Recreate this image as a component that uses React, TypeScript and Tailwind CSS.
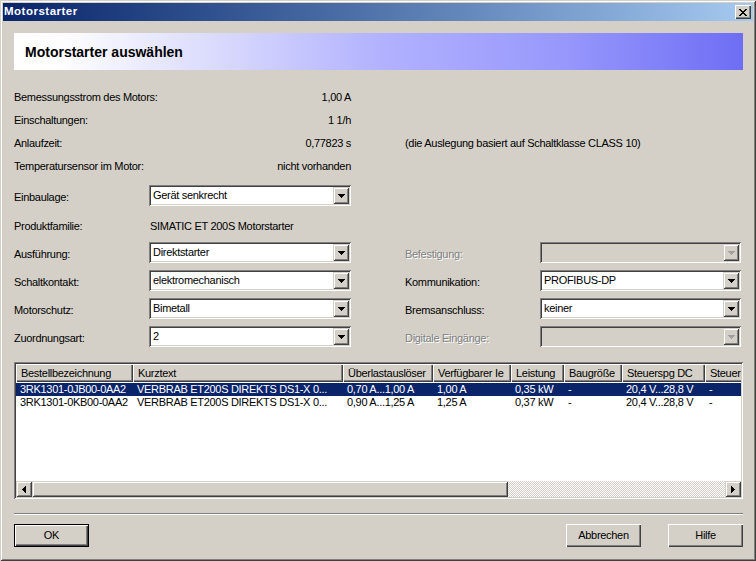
import React from "react";

const SUNKEN =
  "shadow-[inset_1px_1px_0_#808080,inset_-1px_-1px_0_#ffffff,inset_2px_2px_0_#404040,inset_-2px_-2px_0_#d4d0c8]";
const RAISED =
  "shadow-[inset_1px_1px_0_#ffffff,inset_-1px_-1px_0_#404040,inset_-2px_-2px_0_#808080]";
const RAISED_COMBO =
  "shadow-[inset_1px_1px_0_#d4d0c8,inset_-1px_-1px_0_#404040,inset_2px_2px_0_#ffffff,inset_-2px_-2px_0_#808080]";

function DownArrow({ color }: { color: string }) {
  return (
    <svg width="7" height="4" viewBox="0 0 7 4" shapeRendering="crispEdges">
      <rect x="0" y="0" width="7" height="1" fill={color} />
      <rect x="1" y="1" width="5" height="1" fill={color} />
      <rect x="2" y="2" width="3" height="1" fill={color} />
      <rect x="3" y="3" width="1" height="1" fill={color} />
    </svg>
  );
}

function SideArrow({ dir }: { dir: "left" | "right" }) {
  return (
    <svg width="4" height="7" viewBox="0 0 4 7" shapeRendering="crispEdges">
      {dir === "left" ? (
        <>
          <rect x="3" y="0" width="1" height="7" fill="#000" />
          <rect x="2" y="1" width="1" height="5" fill="#000" />
          <rect x="1" y="2" width="1" height="3" fill="#000" />
          <rect x="0" y="3" width="1" height="1" fill="#000" />
        </>
      ) : (
        <>
          <rect x="0" y="0" width="1" height="7" fill="#000" />
          <rect x="1" y="1" width="1" height="5" fill="#000" />
          <rect x="2" y="2" width="1" height="3" fill="#000" />
          <rect x="3" y="3" width="1" height="1" fill="#000" />
        </>
      )}
    </svg>
  );
}

function Combo({ value, disabled }: { value?: string; disabled?: boolean }) {
  return (
    <div
      className={`h-[21px] w-full flex p-[2px] ${SUNKEN} ${
        disabled ? "bg-[#d4d0c8]" : "bg-white"
      }`}
    >
      <div className="flex-1 flex items-center pl-[2px] whitespace-nowrap overflow-hidden">
        {value}
      </div>
      <div
        className={`w-[16px] h-full bg-[#d4d0c8] flex items-center justify-center ${RAISED_COMBO}`}
      >
        <DownArrow color={disabled ? "#a0a0a0" : "#000000"} />
      </div>
    </div>
  );
}

function Label({ text, disabled }: { text: string; disabled?: boolean }) {
  return (
    <div
      className={`flex items-center pt-[3px] whitespace-nowrap ${
        disabled ? "text-[#808080] [text-shadow:1px_1px_0_#ffffff]" : ""
      }`}
    >
      {text}
    </div>
  );
}

function Button({ text, isDefault }: { text: string; isDefault?: boolean }) {
  return (
    <div
      className={`w-[75px] h-[23px] flex items-center justify-center bg-[#d4d0c8] ${
        isDefault ? "border border-black" : ""
      } ${RAISED}`}
    >
      {text}
    </div>
  );
}

const COLS = [117, 210, 90, 78, 53, 58, 83, 90];
const HEADERS = [
  "Bestellbezeichnung",
  "Kurztext",
  "Überlastauslöser",
  "Verfügbarer Ie",
  "Leistung",
  "Baugröße",
  "Steuerspg DC",
  "Steuerspg AC",
];
const ROWS = [
  [
    "3RK1301-0JB00-0AA2",
    "VERBRAB ET200S DIREKTS DS1-X 0...",
    "0,70 A...1,00 A",
    "1,00 A",
    "0,35 kW",
    "-",
    "20,4 V...28,8 V",
    "-",
  ],
  [
    "3RK1301-0KB00-0AA2",
    "VERBRAB ET200S DIREKTS DS1-X 0...",
    "0,90 A...1,25 A",
    "1,25 A",
    "0,37 kW",
    "-",
    "20,4 V...28,8 V",
    "-",
  ],
];

const colClass = [
  "w-[117px]",
  "w-[210px]",
  "w-[90px]",
  "w-[78px]",
  "w-[53px]",
  "w-[58px]",
  "w-[83px]",
  "w-[90px]",
];

export default function App() {
  const info: [string, string, string?][] = [
    ["Bemessungsstrom des Motors:", "1,00 A"],
    ["Einschaltungen:", "1 1/h"],
    ["Anlaufzeit:", "0,77823 s", "(die Auslegung basiert auf Schaltklasse CLASS 10)"],
    ["Temperatursensor im Motor:", "nicht vorhanden"],
  ];
  void COLS;

  return (
    <div
      className={`w-[756px] h-[561px] bg-[#d4d0c8] p-[3px] flex flex-col overflow-hidden text-black font-['Liberation_Sans',Arial,sans-serif] text-[11px] tracking-[-0.3px] leading-none shadow-[inset_1px_1px_0_#d4d0c8,inset_-1px_-1px_0_#404040,inset_2px_2px_0_#ffffff,inset_-2px_-2px_0_#808080]`}
    >
      {/* Title bar */}
      <div className="h-[18px] shrink-0 flex items-center justify-between bg-linear-to-r from-[#0a246a] to-[#a6caf0] pl-[1px] pr-[2px]">
        <span className="text-white font-bold text-[11.5px] tracking-[0.5px]">Motorstarter</span>
        <div
          className={`w-[16px] h-[14px] bg-[#d4d0c8] flex items-center justify-center ${RAISED}`}
        >
          <svg width="8" height="7" viewBox="0 0 8 7" shapeRendering="crispEdges">
            <path
              d="M0 0h2v1h1v1h2V1h1V0h2v1H7v1H6v1H5v1h1v1h1v1h1v1H6V6H5V5H3v1H2v1H0V6h1V5h1V4h1V3H2V2H1V1H0z"
              fill="#000"
            />
          </svg>
        </div>
      </div>

      {/* Body */}
      <div className="flex flex-col pl-[11px] pr-[10px]">
        {/* Banner */}
        <div className="mt-[12px] h-[37px] flex items-center pl-[11px] bg-[linear-gradient(90deg,#ffffff_0%,#fdfdff_7%,#d6d6fd_30%,#b2b2ff_50%,#9898fc_75%,#6e6ef5_100%)]">
          <span className="font-bold text-[14px] tracking-normal">Motorstarter auswählen</span>
        </div>

        {/* Info rows */}
        <div className="mt-[16px] flex flex-col">
          {info.map(([l, v, note]) => (
            <div key={l} className="h-[23px] flex items-center">
              <div className="w-[337px] flex justify-between">
                <span>{l}</span>
                <span>{v}</span>
              </div>
              {note && <span className="ml-[54px]">{note}</span>}
            </div>
          ))}
        </div>

        {/* Einbaulage */}
        <div className="mt-[7px] grid grid-cols-[135px_202px] h-[21px]">
          <Label text="Einbaulage:" />
          <Combo value="Gerät senkrecht" />
        </div>

        {/* Produktfamilie */}
        <div className="mt-[10px] h-[21px] grid grid-cols-[135px_auto] items-center">
          <span>Produktfamilie:</span>
          <span className="pl-[1px]">SIMATIC ET 200S Motorstarter</span>
        </div>

        {/* Combo grid */}
        <div className="mt-[5px] grid grid-cols-[135px_202px_54px_135px_201px] auto-rows-[21px] gap-y-[7px]">
          <Label text="Ausführung:" />
          <Combo value="Direktstarter" />
          <div />
          <Label text="Befestigung:" disabled />
          <Combo disabled />

          <Label text="Schaltkontakt:" />
          <Combo value="elektromechanisch" />
          <div />
          <Label text="Kommunikation:" />
          <Combo value="PROFIBUS-DP" />

          <Label text="Motorschutz:" />
          <Combo value="Bimetall" />
          <div />
          <Label text="Bremsanschluss:" />
          <Combo value="keiner" />

          <Label text="Zuordnungsart:" />
          <Combo value="2" />
          <div />
          <Label text="Digitale Eingänge:" disabled />
          <Combo disabled />
        </div>

        {/* Table */}
        <div className={`mt-[15px] h-[137px] w-[729px] p-[2px] bg-white flex flex-col ${SUNKEN}`}>
          <div className="h-[18px] flex overflow-hidden shrink-0">
            {HEADERS.map((h, i) => (
              <div
                key={h}
                className={`${colClass[i]} shrink-0 h-full bg-[#d4d0c8] flex items-center pl-[5px] whitespace-nowrap overflow-hidden ${RAISED}`}
              >
                {h}
              </div>
            ))}
          </div>
          <div className="flex flex-col overflow-hidden">
            {ROWS.map((r, ri) => (
              <div
                key={ri}
                className={`h-[13px] flex items-center whitespace-nowrap overflow-hidden ${
                  ri === 0 ? "bg-[#0a246a] text-white mt-[1px]" : ""
                }`}
              >
                {r.map((c, ci) => (
                  <div
                    key={ci}
                    className={`${colClass[ci]} shrink-0 pl-[4px] overflow-hidden whitespace-nowrap`}
                  >
                    {c}
                  </div>
                ))}
              </div>
            ))}
          </div>
          <div className="flex-1" />
          {/* Horizontal scrollbar */}
          <div className="h-[16px] flex shrink-0">
            <div className={`w-[16px] h-full bg-[#d4d0c8] flex items-center justify-center ${RAISED_COMBO}`}>
              <SideArrow dir="left" />
            </div>
            <div className={`w-[476px] h-full bg-[#d4d0c8] ${RAISED_COMBO}`} />
            <div className="flex-1 h-full bg-[repeating-conic-gradient(#ffffff_0_25%,#d4d0c8_0_50%)] bg-[length:2px_2px]" />
            <div className={`w-[16px] h-full bg-[#d4d0c8] flex items-center justify-center ${RAISED_COMBO}`}>
              <SideArrow dir="right" />
            </div>
          </div>
        </div>

        {/* Separator */}
        <div className="mt-[14px] w-[729px] h-[2px] border-t border-t-[#808080] border-b border-b-white" />

        {/* Buttons */}
        <div className="mt-[9px] w-[729px] flex items-center">
          <Button text="OK" isDefault />
          <div className="flex-1" />
          <Button text="Abbrechen" />
          <div className="w-[27px]" />
          <Button text="Hilfe" />
        </div>
      </div>
    </div>
  );
}
